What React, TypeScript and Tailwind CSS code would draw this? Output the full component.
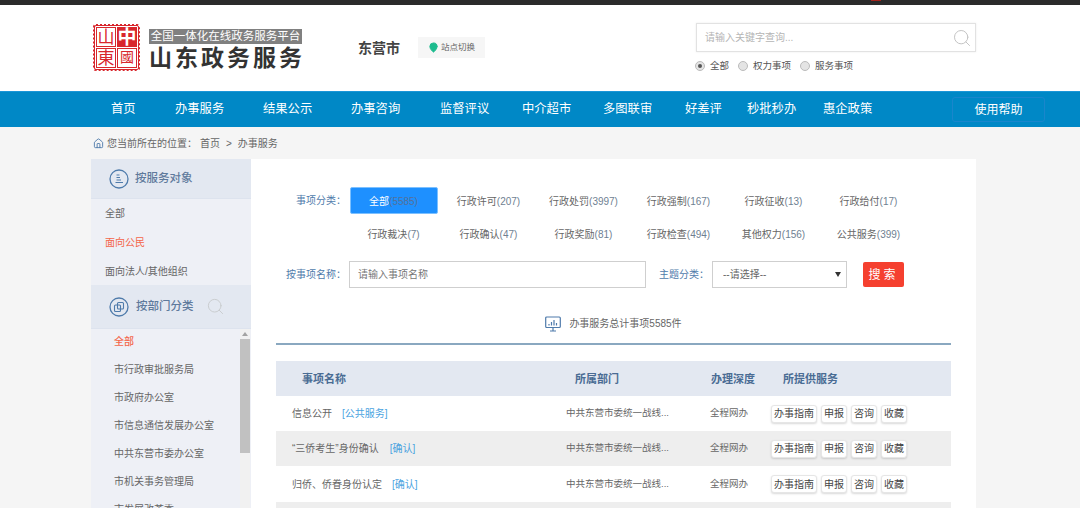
import { Search, MapPin, Home } from 'lucide-react';

const NAV = [
  { label: '首页', className: 'w-[64px]' },
  { label: '办事服务', className: 'w-[88px]' },
  { label: '结果公示', className: 'w-[88px]' },
  { label: '办事咨询', className: 'w-[89px]' },
  { label: '监督评议', className: 'w-[82px]' },
  { label: '中介超市', className: 'w-[81px]' },
  { label: '多图联审', className: 'w-[82px]' },
  { label: '好差评', className: 'w-[62px]' },
  { label: '秒批秒办', className: 'w-[76px]' },
  { label: '惠企政策', className: 'w-[60px]' },
];

const FILTERS = [
  ['全部', '(5585)'],
  ['行政许可', '(207)'],
  ['行政处罚', '(3997)'],
  ['行政强制', '(167)'],
  ['行政征收', '(13)'],
  ['行政给付', '(17)'],
  ['行政裁决', '(7)'],
  ['行政确认', '(47)'],
  ['行政奖励', '(81)'],
  ['行政检查', '(494)'],
  ['其他权力', '(156)'],
  ['公共服务', '(399)'],
];

const DEPTS = [
  '全部',
  '市行政审批服务局',
  '市政府办公室',
  '市信息通信发展办公室',
  '中共东营市委办公室',
  '市机关事务管理局',
  '市发展改革委',
];

const ROWS = [
  { name: '信息公开', tag: '[公共服务]', gap: 'ml-[10px]', bg: 'h-[35px] bg-white' },
  { name: '“三侨考生”身份确认', tag: '[确认]', gap: 'ml-[11px]', bg: 'h-[35px] bg-[#eeeeee]' },
  { name: '归侨、侨眷身份认定', tag: '[确认]', gap: 'ml-[10px]', bg: 'h-[36px] bg-white' },
];

const Seal = () => (
  <div className="grid h-[47px] w-[47px] grid-cols-2 grid-rows-2 gap-[1px] rounded-[3px] border-2 border-dotted border-[#d8262c] bg-white p-[1px] font-['Liberation_Serif','Noto_Sans_CJK_TC',serif] leading-none outline outline-1 -outline-offset-2 outline-[#d8262c]">
    <span className="flex items-center justify-center border border-[#d8262c] text-[17px] text-[#d8262c]">山</span>
    <span className="flex items-center justify-center bg-[#d8262c] text-[19px] font-bold text-white">中</span>
    <span className="flex items-center justify-center border border-[#d8262c] text-[17px] text-[#d8262c]">東</span>
    <span className="flex items-center justify-center border border-[#d8262c] text-[14px] text-[#d8262c]">國</span>
  </div>
);

const RoundIcon = ({ kind }: { kind: 'list' | 'copy' }) => (
  <svg viewBox="0 0 20 20" className="h-[20px] w-[20px] shrink-0 text-[#4f7bab]" fill="none" stroke="currentColor">
    <circle cx="10" cy="10" r="9" strokeWidth="1.3" />
    {kind === 'list' ? (
      <path d="M7.5 6h3M7.5 8.5h3.5M7.5 11h4.5M6.5 13.5h7.5" strokeWidth="1.1" />
    ) : (
      <>
        <rect x="8.5" y="5.5" width="6" height="6.5" rx="1" strokeWidth="1.1" />
        <rect x="5.5" y="8" width="6" height="6.5" rx="1" strokeWidth="1.1" />
      </>
    )}
  </svg>
);

const Radio = ({ on, label }: { on?: boolean; label: string }) => (
  <span className="flex items-center gap-[5px]">
    <span className="flex h-[10px] w-[10px] items-center justify-center rounded-full border border-[#bbbbbb] bg-[#e4e4e4]">
      {on && <span className="h-[4px] w-[4px] rounded-full bg-[#555555]" />}
    </span>
    {label}
  </span>
);

const Sidebar = () => (
  <aside className="h-[349px] w-[160px] shrink-0 overflow-hidden bg-[#eef0f6]">
    <div className="flex h-[40px] items-center gap-[6px] border-b border-[#dde3ee] bg-[#e3e8f1] pl-[18px] text-[11.5px] font-medium text-[#5f7a9c]">
      <RoundIcon kind="list" />
      按服务对象
    </div>
    <ul className="h-[86px] pl-[14px] text-[10px]">
      <li className="flex h-[29px] items-center text-[#666666]">全部</li>
      <li className="flex h-[29px] items-center text-[#f4664a]">面向公民</li>
      <li className="flex h-[28px] items-center text-[#666666]">面向法人/其他组织</li>
    </ul>
    <div className="flex h-[44px] items-center border-b border-[#dde3ee] bg-[#e3e8f1] pl-[18px] text-[11.5px] font-medium text-[#5f7a9c]">
      <RoundIcon kind="copy" />
      <span className="ml-[7px]">按部门分类</span>
      <Search className="ml-[12px] h-[19px] w-[19px] text-[#c8cbce]" strokeWidth={1.2} />
    </div>
    <div className="flex h-[180px]">
      <ul className="-mt-[2px] flex-1 pl-[23px] text-[10px] text-[#666666]">
        {DEPTS.map((d, i) => (
          <li key={d} className={i === 0 ? 'flex h-[28px] items-center font-medium text-[#f4664a]' : 'flex h-[28px] items-center'}>
            {d}
          </li>
        ))}
      </ul>
      <div className="mr-[1px] flex w-[10px] flex-col items-center bg-[#f1f1f1]">
        <span className="mt-[3px] h-0 w-0 border-x-[3px] border-b-[4px] border-x-transparent border-b-[#a3a3a3]" />
        <span className="mt-[3px] h-[114px] w-full bg-[#c1c1c1]" />
      </div>
    </div>
  </aside>
);

const Filters = () => (
  <div className="flex pl-[45px] pt-[28px] text-[10px]">
    <span className="mt-[6px] w-[50px] text-[#4f7bab]">事项分类：</span>
    <div className="grid w-[570px] grid-cols-6 gap-y-[6px]">
      {FILTERS.map(([name, count], i) => (
        <div
          key={name}
          className={
            i === 0
              ? 'mx-auto flex h-[27px] w-[88px] items-center justify-center rounded-[2px] border border-[#7cc0ff] bg-[#1e90ff] pt-[1px]'
              : 'flex h-[27px] items-center justify-center pt-[2px] text-[#666666]'
          }
        >
          <span className={i === 0 ? 'text-white' : ''}>{name}</span>
          <span className={i === 0 ? 'text-[#54709a]' : 'text-[#6f7f92]'}>{count}</span>
        </div>
      ))}
    </div>
  </div>
);

const SearchRow = () => (
  <div className="mt-[14px] flex h-[27px] items-center pl-[35px] text-[10px]">
    <span className="w-[63px] text-[#4f7bab]">按事项名称：</span>
    <input
      placeholder="请输入事项名称"
      className="h-[27px] w-[297px] border border-[#cfcfcf] bg-white pl-[8px] text-[10px] outline-none placeholder:text-[#777777]"
    />
    <span className="ml-[13px] w-[53px] text-[#4f7bab]">主题分类：</span>
    <div className="relative">
      <select
        defaultValue=""
        className="h-[27px] w-[135px] appearance-none border border-[#cfcfcf] bg-white pl-[10px] text-[10px] text-[#666666] outline-none"
      >
        <option value="">--请选择--</option>
      </select>
      <span className="absolute right-[6px] top-[11px] h-0 w-0 border-x-[3px] border-t-[5px] border-x-transparent border-t-[#333333]" />
    </div>
    <button className="ml-[16px] h-[25px] w-[41px] rounded-[2px] bg-[#f5402f] text-[12px] tracking-[3px] text-white">搜索</button>
  </div>
);

const ChartIcon = () => (
  <svg viewBox="0 0 16 16" className="h-[16px] w-[16px] text-[#4f7bab]" fill="none" stroke="currentColor">
    <rect x="0.7" y="1" width="14.6" height="10.5" rx="1" strokeWidth="1.2" />
    <path d="M4 9.5V8M6.5 9.5V6M9 9.5V4M11.5 9.5V7M5 15h6M8 11.5V15" strokeWidth="1.2" />
  </svg>
);

const ServiceTable = () => (
  <div className="mx-[25px] text-[10px]">
    <div className="grid h-[35px] grid-cols-[290px_144px_61px_1fr] items-center bg-[#e3e8f1] pt-[2px] text-[11px] font-bold text-[#4a6c94]">
      <span className="pl-[26px]">事项名称</span>
      <span className="pl-[9px]">所属部门</span>
      <span className="pl-[1px]">办理深度</span>
      <span className="pl-[12px]">所提供服务</span>
    </div>
    {ROWS.map((r) => (
      <div key={r.name} className={`grid grid-cols-[290px_144px_61px_1fr] items-center text-[#666666] ${r.bg}`}>
        <span className="pl-[16px]">
          {r.name}
          <span className={`${r.gap} text-[#4aa3df]`}>{r.tag}</span>
        </span>
        <span className="text-[9.5px]">中共东营市委统一战线...</span>
        <span className="text-[9.5px]">全程网办</span>
        <div className="flex gap-[4px]">
          {['办事指南', '申报', '咨询', '收藏'].map((b) => (
            <span
              key={b}
              className="flex h-[18px] items-center rounded-[3px] border border-[#e6e6e6] bg-white px-[2px] text-[#444444] shadow-[0_1px_2px_rgba(0,0,0,0.15)]"
            >
              {b}
            </span>
          ))}
        </div>
      </div>
    ))}
    <div className="h-[35px] bg-[#eeeeee]" />
  </div>
);

export default function App() {
  return (
    <div className="relative h-[508px] w-[1080px] overflow-hidden bg-[#f5f5f5] font-['Liberation_Sans','Noto_Sans_CJK_SC',sans-serif]">
      <div className="h-[5px] bg-[#2b2b2b]" />
      <div className="absolute left-[871px] top-0 h-[1px] w-[10px] bg-[#a3241d]" />

      <header className="flex h-[86px] items-start bg-white pl-[93px]">
        <div className="mt-[19px]">
          <Seal />
        </div>
        <div className="ml-[9px] mt-[24px] w-[153px]">
          <div className="flex h-[15px] items-center justify-center bg-[#808080] text-[11.5px] leading-none text-white">
            全国一体化在线政务服务平台
          </div>
          <div className="mt-[1px] whitespace-nowrap text-[23px] font-bold leading-[26px] tracking-[3px] text-[#333333]">山东政务服务</div>
        </div>
        <div className="ml-[56px] mt-[33px] text-[14px] font-bold leading-[20px] text-[#444444]">东营市</div>
        <div className="ml-[18px] mt-[32px] flex h-[21px] w-[67px] items-center gap-[2px] bg-[#f6f6f6] pl-[10px] text-[8.5px] text-[#666666]">
          <MapPin className="h-[11px] w-[11px] text-[#1dbb8e]" fill="#1dbb8e" stroke="#1dbb8e" />
          站点切换
        </div>
        <div className="ml-[211px] mt-[18px] w-[280px]">
          <div className="flex h-[29px] items-center justify-between border border-[#e2e2e2] bg-white pl-[8px] pr-[3px] text-[10px] text-[#b5b5b5] shadow-[0_0_2px_rgba(0,0,0,0.08)]">
            请输入关键字查询...
            <Search className="h-[20px] w-[20px] text-[#c4c4c4]" strokeWidth={1.2} />
          </div>
          <div className="-ml-[1px] mt-[8px] flex h-[12px] items-center gap-[9px] text-[9.5px] text-[#555555]">
            <Radio on label="全部" />
            <Radio label="权力事项" />
            <Radio label="服务事项" />
          </div>
        </div>
      </header>

      <nav className="flex h-[36px] items-center border-t border-[#1a96d8] bg-[#0088c6] pl-[111px] text-[12.3px] text-white">
        {NAV.map((n) => (
          <span key={n.label} className={`whitespace-nowrap ${n.className}`}>
            {n.label}
          </span>
        ))}
        <span className="ml-[69px] flex h-[25px] w-[93px] items-center justify-center rounded-[3px] border border-[#1a86cc] text-[12px]">
          使用帮助
        </span>
      </nav>

      <div className="flex h-[32px] items-center pl-[93px] text-[10px] text-[#666666]">
        <Home className="mr-[3px] h-[11px] w-[11px] text-[#4f7bab]" />
        您当前所在的位置：
        <span className="ml-[3px]">首页</span>
        <span className="mx-[6px]">&gt;</span>
        办事服务
      </div>

      <div className="ml-[91px] flex w-[885px]">
        <Sidebar />
        <main className="h-[349px] flex-1 overflow-hidden bg-white">
          <Filters />
          <SearchRow />
          <div className="mx-[25px] mt-[22px] flex h-[35px] items-start justify-center gap-[8px] border-b-2 border-[#8aa8c0] pt-[6px] text-[10px] leading-[16px] text-[#666666]">
            <ChartIcon />
            办事服务总计事项5585件
          </div>
          <div className="h-[16px]" />
          <ServiceTable />
        </main>
      </div>
    </div>
  );
}
